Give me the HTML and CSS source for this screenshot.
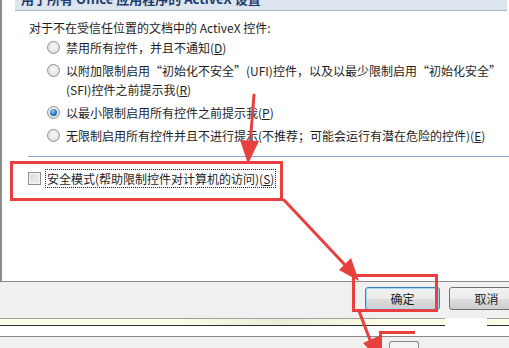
FILE: index.html
```html
<!DOCTYPE html>
<html lang="zh-CN">
<head>
<meta charset="utf-8">
<link rel="stylesheet" href="styles.css">
</head>
<body>
<div class="page">
  <div class="panel">
    <div class="header"><span class="header-title">用于所有 Office 应用程序的 ActiveX 设置</span></div>
    <div class="content">
      <p class="intro">对于不在受信任位置的文档中的 ActiveX 控件:</p>
      <ul class="options">
        <li class="opt"><span class="radio"></span><span class="label">禁用所有控件，并且不通知(<u>D</u>)</span></li>
        <li class="opt"><span class="radio"></span><span class="label">以附加限制启用“初始化不安全”(UFI)控件，以及以最少限制启用“初始化安全”<br>(SFI)控件之前提示我(<u>R</u>)</span></li>
        <li class="opt"><span class="radio checked"></span><span class="label">以最小限制启用所有控件之前提示我(<u>P</u>)</span></li>
        <li class="opt"><span class="radio"></span><span class="label">无限制启用所有控件并且不进行提示(不推荐；可能会运行有潜在危险的控件)(<u>E</u>)</span></li>
      </ul>
    </div>
    <div class="sep"></div>
    <div class="safe">
      <span class="check"></span><span class="focus">安全模式(帮助限制控件对计算机的访问)(<u>S</u>)</span>
    </div>
  </div>
  <div class="buttonbar">
    <button class="btn btn-default">确定</button>
    <button class="btn">取消</button>
  </div>
  <div class="strip-yellow"></div>
  <div class="strip-white"></div>
  <div class="strip-gray"><span class="mini-btn"></span></div>

  <div class="patch"></div>
  <div class="mark mark-safe"></div>
  <div class="mark mark-ok"></div>
  <div class="mark mark-next"></div>
  <svg class="arrows" width="509" height="348" viewBox="0 0 509 348">
    <g stroke="#e8403f" stroke-width="3" fill="#e8403f" stroke-linecap="round">
      <line x1="254" y1="95" x2="250" y2="145"/>
      <polygon points="240,140 259,141 248,164" stroke="none"/>
      <line x1="284" y1="200" x2="346" y2="266"/>
      <polygon points="351,258 339,270 359,281" stroke="none"/>
      <line x1="359" y1="311" x2="370" y2="340"/>
      <polygon points="379,336 363,343 381,362" stroke="none"/>
    </g>
  </svg>
</div>
</body>
</html>
```
FILE: styles.css
```css
* { box-sizing: border-box; }
html, body { margin: 0; padding: 0; }
body {
  width: 509px;
  height: 348px;
  overflow: hidden;
  background: #ffffff;
  font-family: "Noto Sans CJK SC", "Noto Sans", sans-serif;
  font-size: 12px;
  color: #1e1e1e;
}
.page {
  position: relative;
  width: 509px;
  height: 348px;
  overflow: hidden;
}
.panel {
  height: 282px;
  background: #ffffff;
  border-left: 2px solid #8c8c8c;
  border-bottom: 1px solid #8a8a8a;
}
.header {
  margin-left: 13px;
  margin-right: 2px;
  height: 11px;
  background: #dce5ed;
  border-bottom: 1px solid #a7b5c4;
  overflow: hidden;
}
.header-title {
  display: block;
  margin-top: -9px;
  margin-left: 6px;
  line-height: 16px;
  font-size: 13px;
  font-weight: bold;
  color: #1d3b6c;
  white-space: nowrap;
}
.content {
  padding: 7px 0 0 27px;
}
.intro {
  margin: 0;
  line-height: 20px;
}
.options {
  list-style: none;
  margin: 0;
  padding: 0 0 0 18px;
  display: flex;
  flex-direction: column;
  gap: 4px;
}
.opt {
  display: flex;
  align-items: flex-start;
  line-height: 19px;
  white-space: nowrap;
}
.radio {
  flex: none;
  width: 13px;
  height: 13px;
  margin-top: 3px;
  margin-right: 6px;
  border-radius: 50%;
  border: 1px solid #8f9091;
  background: radial-gradient(circle at 50% 40%, #fafafa 0%, #e6e6e6 55%, #cfcfcf 100%);
  position: relative;
}
.radio.checked::after {
  content: "";
  position: absolute;
  left: 2px;
  top: 2px;
  width: 7px;
  height: 7px;
  border-radius: 50%;
  background: radial-gradient(circle at 40% 35%, #9fd0f5 0%, #2b78c2 50%, #124c8a 100%);
}
.label u { text-decoration: underline; }
.sep {
  margin: 11px 0 0 26px;
  height: 1px;
  background: #86a5d3;
}
.safe {
  display: flex;
  align-items: center;
  padding: 13px 0 0 26px;
}
.check {
  flex: none;
  width: 13px;
  height: 13px;
  margin-right: 5px;
  border: 1px solid #8e8f8f;
  background: linear-gradient(135deg, #d9d9d9, #f3f3f3);
  box-shadow: inset 0 0 0 1px #f6f6f6;
}
.focus {
  padding: 0 1px;
  line-height: 17px;
  outline: 1px dotted #222;
  outline-offset: 0;
  white-space: nowrap;
}
.buttonbar {
  height: 36px;
  background: #f0f0f0;
  display: flex;
  align-items: flex-start;
  padding: 5px 0 0 365px;
  gap: 9px;
}
.btn {
  flex: none;
  width: 75px;
  height: 23px;
  border: 1px solid #707070;
  border-radius: 3px;
  background: linear-gradient(#f2f2f2 0%, #ebebeb 50%, #dddddd 51%, #cfcfcf 100%);
  font-family: inherit;
  font-size: 12px;
  color: #1e1e1e;
  padding: 0;
  line-height: 21px;
}
.btn-default {
  border-color: #3c7fb1;
  box-shadow: inset 0 0 0 1px #a7d8f7;
}
.strip-yellow {
  height: 8px;
  border-top: 1px solid #a0a0a0;
  border-bottom: 1px solid #2c2c2c;
  background: linear-gradient(90deg, #fbfbe6 0%, #fbfbe6 35%, #ececd8 55%, #fbfbe6 75%, #fbfbe6 100%);
}
.strip-white {
  height: 10px;
  background: #ffffff;
}
.strip-gray {
  height: 12px;
  border-top: 1px solid #8a8a8a;
  background: #f0f0f0;
  padding-left: 389px;
  padding-top: 4px;
}
.mini-btn {
  display: block;
  width: 30px;
  height: 12px;
  border: 1px solid #8a8a8a;
  border-bottom: none;
  border-radius: 3px 3px 0 0;
  background: #f4f4f4;
}
.patch {
  position: absolute;
  left: 445px;
  top: 318px;
  width: 42px;
  height: 15px;
  background: #ffffff;
}
.mark {
  position: absolute;
  border: 3px solid #e8403f;
}
.mark-safe {
  left: 10px;
  top: 161px;
  width: 273px;
  height: 40px;
}
.mark-ok {
  left: 352px;
  top: 274px;
  width: 86px;
  height: 38px;
}
.mark-next {
  left: 379px;
  top: 331px;
  width: 36px;
  height: 30px;
  border-right: none;
}
.arrows {
  position: absolute;
  left: 0;
  top: 0;
  pointer-events: none;
}
```
